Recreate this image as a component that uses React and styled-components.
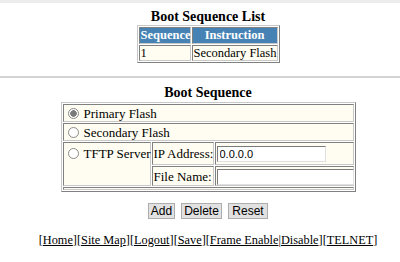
import React from 'react';
import styled, { createGlobalStyle } from 'styled-components';

const GlobalStyle = createGlobalStyle`
    body {
        margin:0;
        background:#fff;
        font-family:"Liberation Serif", "Times New Roman", serif;
        color:#000;
    }
    table, td, th {
        font-family:"Liberation Serif", "Times New Roman", serif;
    }
`

const Radio = ({ checked }) => (
    <RadioMark $checked={checked} />
)

const App = () => {
    return (
        <Page>
            <GlobalStyle />
            <TopBand />
            <Title>Boot Sequence List</Title>
            <ListTable>
                <colgroup>
                    <col style={{ width: 52 }} />
                    <col />
                </colgroup>
                <tbody>
                    <tr>
                        <HeadCell>Sequence</HeadCell>
                        <HeadCell>Instruction</HeadCell>
                    </tr>
                    <tr>
                        <ListCell>1</ListCell>
                        <ListCell>Secondary Flash</ListCell>
                    </tr>
                </tbody>
            </ListTable>
            <Rule />
            <Title $top={7}>Boot Sequence</Title>
            <FormTable>
                <colgroup>
                    <col style={{ width: 88 }} />
                    <col style={{ width: 62 }} />
                    <col />
                </colgroup>
                <tbody>
                    <tr>
                        <FormCell colSpan={3} $h={18}>
                            <Radio checked />Primary Flash
                        </FormCell>
                    </tr>
                    <tr>
                        <FormCell colSpan={3} $h={18}>
                            <Radio />Secondary Flash
                        </FormCell>
                    </tr>
                    <tr>
                        <FormCell rowSpan={2} $top>
                            <Radio />TFTP Server
                        </FormCell>
                        <FormCell $h={23}>IP Address:</FormCell>
                        <FormCell $h={23} $tight>
                            <TextBox defaultValue="0.0.0.0" $w={109} />
                        </FormCell>
                    </tr>
                    <tr>
                        <FormCell $h={20}>File Name:</FormCell>
                        <FormCell $h={20} $tight>
                            <TextBox defaultValue="" $w={137} />
                        </FormCell>
                    </tr>
                    <tr>
                        <EmptyCell colSpan={3} />
                    </tr>
                </tbody>
            </FormTable>
            <ButtonRow>
                <Btn $w={27}>Add</Btn>
                <Btn $w={41}>Delete</Btn>
                <Btn $w={40}>Reset</Btn>
            </ButtonRow>
            <NavLine>
                [<NavLink href="#">Home</NavLink>][<NavLink href="#">Site Map</NavLink>][<NavLink href="#">Logout</NavLink>][<NavLink href="#">Save</NavLink>][<NavLink href="#">Frame Enable</NavLink>|<NavLink href="#">Disable</NavLink>][<NavLink href="#">TELNET</NavLink>]
            </NavLine>
        </Page>
    );
};

const Page = styled.div`
    width:384px;
    height:262px;
    padding-left:16px;
    overflow:hidden;
`

const TopBand = styled.div`
    height:3px;
    margin-left:-16px;
    width:400px;
    background:#ececec;
`

const Title = styled.h3`
    margin:${p => p.$top || 6}px 0 0;
    font-size:14px;
    line-height:16px;
    font-weight:bold;
    text-align:center;
`

const ListTable = styled.table`
    width:143px;
    margin:0 auto;
    table-layout:fixed;
    border-collapse:separate;
    border-spacing:1px;
    border:1px solid;
    border-color:#c8c8c8 #808080 #808080 #c8c8c8;
    background:#fff;
    font-size:12.5px;
`

const HeadCell = styled.th`
    height:15px;
    padding:0 1px;
    border:1px solid;
    border-color:#808080 #c8c8c8 #c8c8c8 #808080;
    background:#4682b4;
    color:#fff;
    font-weight:bold;
    line-height:15px;
    text-align:center;
    white-space:nowrap;
`

const ListCell = styled.td`
    height:14px;
    padding:0 1px;
    border:1px solid;
    border-color:#808080 #c8c8c8 #c8c8c8 #808080;
    background:#fffdf1;
    line-height:14px;
    white-space:nowrap;
`

const Rule = styled.hr`
    margin:13px 0 0 -16px;
    width:400px;
    border:0;
    height:2px;
    background:#d3d3d3;
`

const FormTable = styled.table`
    width:295px;
    margin:1px auto 0;
    table-layout:fixed;
    border-collapse:separate;
    border-spacing:1px;
    border:1px solid;
    border-color:#c8c8c8 #808080 #808080 #c8c8c8;
    background:#fff;
    font-size:13px;
`

const FormCell = styled.td`
    height:${p => (p.$h ? p.$h - 2 : 16)}px;
    padding:${p => (p.$tight ? '0' : '0 1px')};
    border:1px solid;
    border-color:#808080 #c8c8c8 #c8c8c8 #808080;
    background:#fffdf1;
    vertical-align:${p => (p.$top ? 'top' : 'middle')};
    line-height:${p => (p.$top ? '21px' : '15px')};
    white-space:nowrap;
`

const EmptyCell = styled.td`
    height:1px;
    padding:0;
    border:1px solid;
    border-color:#808080 #c8c8c8 #c8c8c8 #808080;
    background:#fffdf1;
    font-size:0;
    line-height:0;
`

const RadioMark = styled.span`
    display:inline-block;
    box-sizing:border-box;
    width:11px;
    height:11px;
    margin:0 5px 0 3px;
    vertical-align:-1px;
    border:1px solid #8a8a8a;
    border-radius:50%;
    background:${p => (p.$checked ? 'radial-gradient(circle, #7a7a7a 0 3px, #fff 3.5px)' : '#fff')};
`

const TextBox = styled.input`
    box-sizing:border-box;
    width:${p => p.$w}px;
    height:16px;
    margin:0 0 0 1px;
    padding:0 2px;
    border:1px solid;
    border-color:#7a7a7a #e0e0e0 #e0e0e0 #7a7a7a;
    background:#fff;
    font-family:"Liberation Sans", Arial, sans-serif;
    font-size:11px;
    color:#000;
    vertical-align:middle;
    outline:none;
`

const ButtonRow = styled.div`
    display:flex;
    justify-content:center;
    gap:6px;
    margin-top:11px;
`

const Btn = styled.button`
    width:${p => p.$w}px;
    height:16px;
    margin:0;
    padding:0;
    border:1px solid #adadad;
    background:#e1e1e1;
    font-family:"Liberation Sans", Arial, sans-serif;
    font-size:12px;
    line-height:14px;
    color:#000;
`

const NavLine = styled.div`
    margin-top:14px;
    text-align:center;
    font-size:12.3px;
    line-height:14px;
    white-space:nowrap;
`

const NavLink = styled.a`
    color:#000;
    text-decoration:underline;
`

export default App;
